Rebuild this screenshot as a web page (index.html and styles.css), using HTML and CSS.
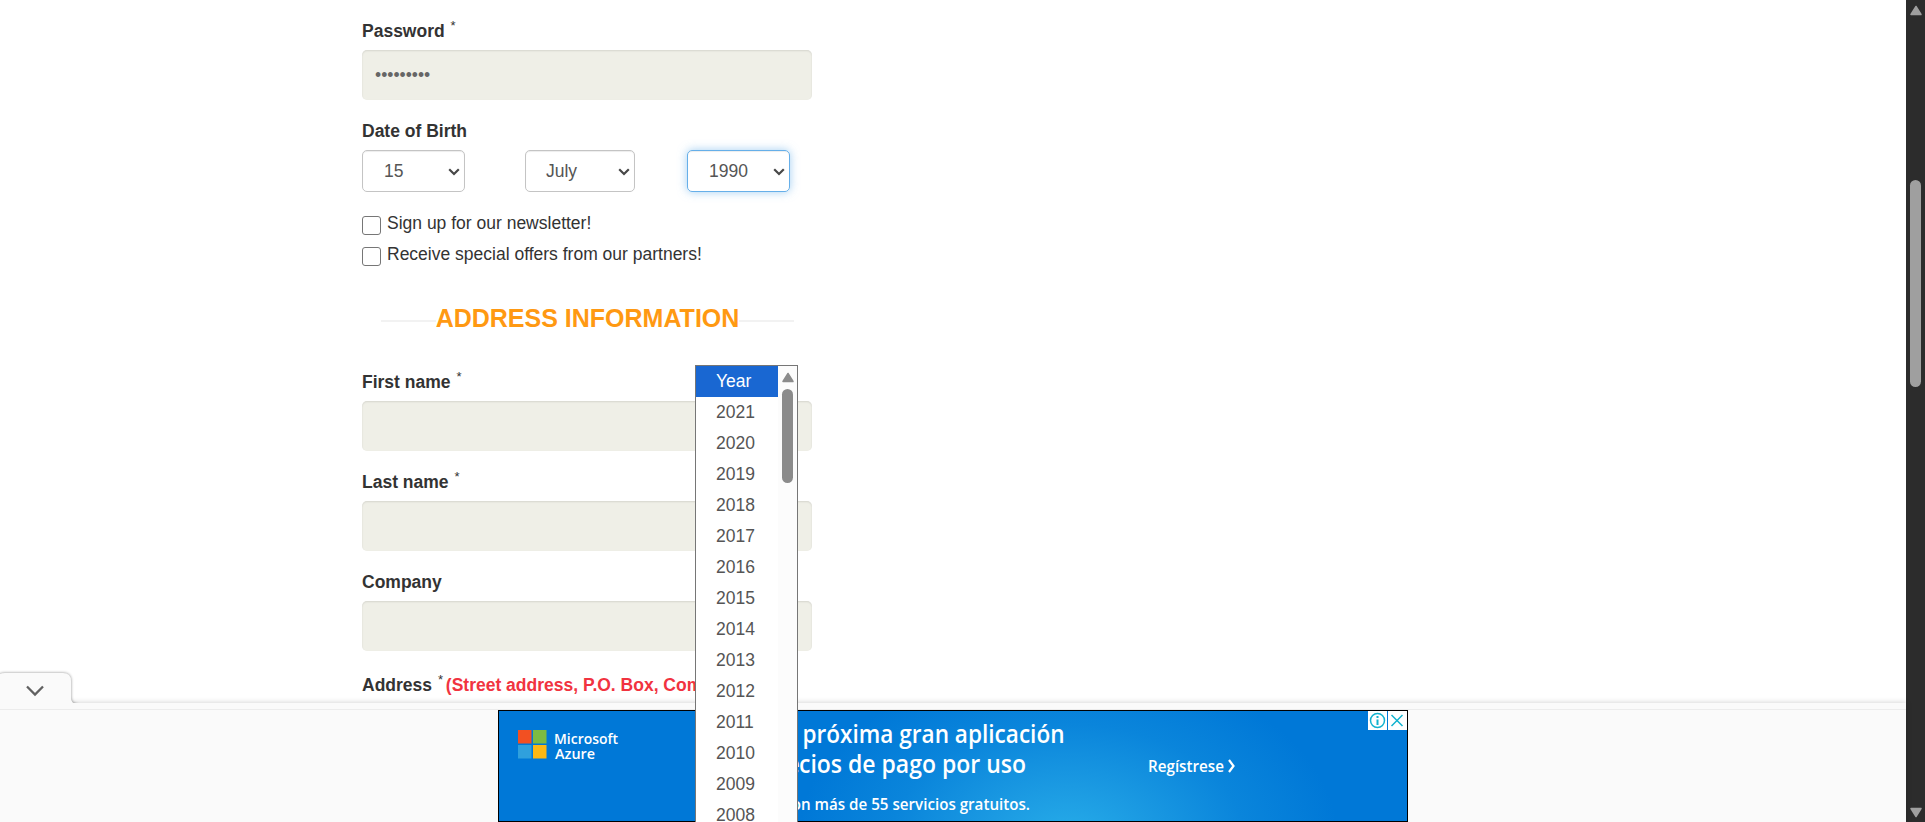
FILE: index.html
```html
<!DOCTYPE html>
<html lang="en">
<head>
<meta charset="utf-8">
<title>Create an account</title>
<link rel="stylesheet" href="styles.css">
</head>
<body>
<div class="page">
  <main class="content">
    <form class="form">
      <div class="group">
        <label class="label">Password <sup>*</sup></label>
        <input class="field" type="password" value="secret123">
      </div>
      <div class="group">
        <label class="label">Date of Birth</label>
        <div class="dates">
          <div class="select"><span>15</span><svg width="12" height="8" viewBox="0 0 12 8"><path d="M1.2 1.2 6 6l4.800-4.800"/></svg></div>
          <div class="select select-month"><span>July</span><svg width="12" height="8" viewBox="0 0 12 8"><path d="M1.2 1.2 6 6l4.800-4.800"/></svg></div>
          <div class="select select-focus"><span>1990</span><svg width="12" height="8" viewBox="0 0 12 8"><path d="M1.2 1.2 6 6l4.800-4.800"/></svg></div>
        </div>
      </div>
      <div class="checks">
        <div class="check"><span class="box"></span><span>Sign up for our newsletter!</span></div>
        <div class="check"><span class="box"></span><span>Receive special offers from our partners!</span></div>
      </div>
      <h3 class="heading"><span>ADDRESS INFORMATION</span></h3>
      <div class="group">
        <label class="label">First name <sup>*</sup></label>
        <input class="field" type="text">
      </div>
      <div class="group">
        <label class="label">Last name <sup>*</sup></label>
        <input class="field" type="text">
      </div>
      <div class="group">
        <label class="label">Company</label>
        <input class="field" type="text">
      </div>
      <label class="label address">Address <sup>*</sup> <span class="hint">(Street address, P.O. Box, Company</span></label>
    </form>

    <div class="anchor">
      <svg class="tab" width="84" height="42" viewBox="0 0 84 42">
        <path class="tab-shape" d="M-2 42V10Q-2 5 5 5H63Q71 5 71 13V30Q71 35.500 77 36V42Z"/>
        <path class="tab-chevron" d="M27 18.500 35 26.500 43 18.500"/>
      </svg>
      <div class="anchor-edge"></div>
      <div class="anchor-body">
        <svg class="ad" width="910" height="112" viewBox="0 0 910 112">
          <defs>
            <radialGradient id="glow" gradientUnits="userSpaceOnUse" cx="570" cy="130" r="270" gradientTransform="translate(570 130) scale(1 .66) translate(-570 -130)">
              <stop offset="0" stop-color="#27ade9"/>
              <stop offset=".3" stop-color="#1b9ae2"/>
              <stop offset=".65" stop-color="#0a85db"/>
              <stop offset="1" stop-color="#0078d7"/>
            </radialGradient>
          </defs>
          <rect width="910" height="112" fill="#0078d7"/>
          <rect width="910" height="112" fill="url(#glow)"/>
          <rect x="20" y="20" width="13.500" height="13.500" fill="#f25022"/>
          <rect x="35" y="20" width="13.500" height="13.500" fill="#7dbb42"/>
          <rect x="20" y="35" width="13.500" height="13.500" fill="#2fa0dd"/>
          <rect x="35" y="35" width="13.500" height="13.500" fill="#fdb813"/>
          <g class="ad-text">
            <text x="56" y="33.500" font-size="14.500" textLength="64" lengthAdjust="spacingAndGlyphs">Microsoft</text>
            <text x="57" y="48.500" font-size="14.500" textLength="40" lengthAdjust="spacingAndGlyphs">Azure</text>
            <text x="304.500" y="33" font-size="24.500" textLength="262" lengthAdjust="spacingAndGlyphs">próxima gran aplicación</text>
            <text x="301" y="63" font-size="24.500" textLength="227" lengthAdjust="spacingAndGlyphs">cios de pago por uso</text>
            <text x="302" y="63" font-size="24.500" text-anchor="end">Pre</text>
            <text x="303" y="100" font-size="16" textLength="229" lengthAdjust="spacingAndGlyphs">n más de 55 servicios gratuitos.</text>
            <text x="303" y="100" font-size="16" text-anchor="end">Co</text>
            <text x="650" y="62" font-size="16.500" textLength="76" lengthAdjust="spacingAndGlyphs">Regístrese</text>
          </g>
          <path d="M731 50 735.500 56 731 62" fill="none" stroke="#fff" stroke-width="2.200"/>
          <path d="M870 1h19v19h-19zM890 1h19v19h-19z" fill="#fff"/>
          <g fill="none" stroke="#12b3cf" stroke-width="1.500">
            <circle cx="879.500" cy="10.500" r="7"/>
            <path d="m893.500 5 11 11m0-11-11 11"/>
            <path stroke-width="2" d="M879.500 6v2m0 1.500V15"/>
          </g>
          <rect x=".5" y=".5" width="909" height="111" fill="none" stroke="#000"/>
        </svg>
      </div>
    </div>
  </main>

  <div class="scroll">
    <svg width="14" height="11" viewBox="0 0 14 11"><path d="M7 1.500 12 9.500H2Z"/></svg>
    <div class="thumb"></div>
    <svg class="down" width="14" height="11" viewBox="0 0 14 11"><path d="M7 9.500 12 1.500H2Z"/></svg>
  </div>

  <div class="popup">
    <ul class="options">
      <li class="active">Year</li><li>2021</li><li>2020</li><li>2019</li><li>2018</li><li>2017</li><li>2016</li><li>2015</li><li>2014</li><li>2013</li><li>2012</li><li>2011</li><li>2010</li><li>2009</li><li>2008</li>
    </ul>
    <div class="popup-scroll">
      <svg width="14" height="11" viewBox="0 0 14 11"><path d="M7 1.500 12 9.500H2Z"/></svg>
      <div class="popup-thumb"></div>
    </div>
  </div>
</div>
</body>
</html>
```
FILE: styles.css
```css
* { box-sizing: border-box; }
body {
  margin: 0;
  background: #fff;
  color: #333;
  font: 17.5px/25px "Liberation Sans", Arial, sans-serif;
}
.page {
  position: relative;
  display: flex;
  height: 822px;
  overflow: hidden;
}
.content {
  display: flex;
  flex-direction: column;
  flex: 1;
  min-width: 0;
}
.form {
  width: 812px;
  height: 703px;
  padding: 19px 0 0 362px;
}
.group { margin-bottom: 19px; }
.label {
  display: block;
  height: 25px;
  margin-bottom: 6px;
  font-weight: 700;
  white-space: nowrap;
}
.label sup {
  margin-left: 1px;
  font-size: 13px;
  font-weight: 400;
  line-height: 0;
  vertical-align: 7.5px;
}
.address { margin-top: 22px; }
.hint { margin-left: -2px; color: #f13340; }
.field {
  display: block;
  width: 450px;
  height: 50px;
  padding: 0 13px;
  border: 0;
  border-radius: 5px;
  background: #efefe7;
  box-shadow: inset 0 1px 2px rgba(0, 0, 0, .11);
  color: #666;
  font: 17.5px "Liberation Sans", Arial, sans-serif;
}
.dates { display: flex; }
.select {
  display: flex;
  align-items: center;
  justify-content: space-between;
  width: 103px;
  height: 42px;
  padding: 0 4px 0 21px;
  border: 1px solid #c4c4c4;
  border-radius: 5px;
  box-shadow: inset 0 1px 1px rgba(0, 0, 0, .075);
  color: #555;
}
.select svg {
  margin-top: 2px;
  fill: none;
  stroke: #484848;
  stroke-width: 2.2;
}
.select-month { width: 110px; margin: 0 52px 0 60px; padding-left: 20px; }
.select-focus {
  border-color: #66afe9;
  box-shadow: inset 0 1px 1px rgba(0, 0, 0, .075), 0 0 10px rgba(102, 175, 233, .6);
}
.check {
  display: flex;
  align-items: flex-start;
  gap: 6px;
  height: 31px;
}
.box {
  width: 19px;
  height: 19px;
  margin-top: 5px;
  border: 1px solid #767676;
  border-radius: 3px;
}
.heading {
  display: grid;
  place-items: center;
  width: 413px;
  height: 36px;
  margin: 27px 0 34px 19px;
  background: linear-gradient(#f2f2f2, #f2f2f2) 0 20px / 100% 2px no-repeat;
  color: #ff9912;
  font-size: 25px;
  line-height: 36px;
}
.heading span { background: #fff; }
.anchor {
  position: relative;
  height: 119px;
  background: #fafafa;
  box-shadow: 0 0 6px rgba(0, 0, 0, .2);
}
.tab {
  position: absolute;
  left: 0;
  top: -35px;
}
.tab-shape {
  fill: #fafafa;
  filter: drop-shadow(0 0 1.5px rgba(0, 0, 0, .45));
}
.tab-chevron { fill: none; stroke: #616161; stroke-width: 2.3; }
.anchor-edge {
  position: relative;
  height: 7px;
  background: #fafafa;
  border-bottom: 1px solid #ececec;
}
.anchor-body { height: 112px; padding-left: 498px; background: #fafafa; }
.ad { display: block; }
.ad-text {
  fill: #fff;
  font-family: "Open Sans", "Noto Sans", sans-serif;
  font-weight: 600;
}
.scroll {
  display: flex;
  flex-direction: column;
  align-items: center;
  width: 19px;
  padding: 5px 0 4px;
  background: #2c2c2c;
  fill: #9f9f9f;
}
.scroll path, .popup-scroll path {
  stroke-width: 1.5;
  stroke-linejoin: round;
}
.scroll path { stroke: #9f9f9f; }
.thumb {
  width: 11px;
  height: 207px;
  margin-top: 164px;
  border-radius: 6px;
  background: #9f9f9f;
}
.down { margin-top: auto; }
.popup {
  position: absolute;
  left: 695px;
  top: 365px;
  display: flex;
  width: 103px;
  height: 470px;
  border: 1px solid #767676;
  background: #fff;
}
.options {
  flex: 1;
  margin: 0;
  padding: 0;
  list-style: none;
  color: #555;
}
.options li { height: 31px; padding-left: 20px; line-height: 31px; }
.options .active { background: #1967d2; color: #fff; }
.popup-scroll {
  display: flex;
  flex-direction: column;
  align-items: center;
  width: 19px;
  padding-top: 6px;
  background: #fcfcfc;
  fill: #8b8b8b;
}
.popup-scroll path { stroke: #8b8b8b; }
.popup-thumb {
  width: 11px;
  height: 94px;
  margin-top: 6px;
  border-radius: 6px;
  background: #8b8b8b;
}
```
